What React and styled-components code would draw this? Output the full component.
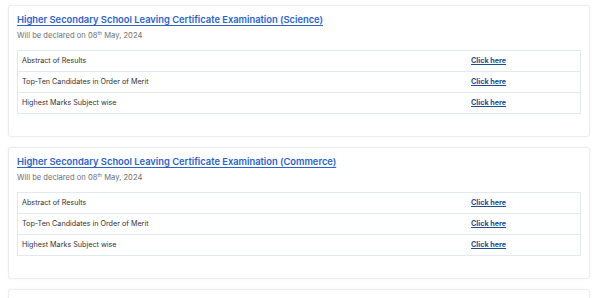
import React from 'react';
import styled, { createGlobalStyle } from 'styled-components';

const GlobalStyle = createGlobalStyle`
    body {
        margin: 0;
        background: #ffffff;
        font-family: 'Inter', 'Liberation Sans', sans-serif;
    }
`;

const Page = styled.div`
    display: flex;
    flex-direction: column;
    gap: 10px;
    padding: 5px 10px 0 8px;
`;

const Card = styled.div`
    background: #fff;
    border: 1px solid #ececec;
    border-radius: 3px;
    box-shadow: 0 0 3px rgba(0, 0, 0, 0.04);
    padding: 6px 8px 22px 8px;
`;

const Title = styled.a`
    display: block;
    font-size: 9.4px;
    line-height: 16px;
    font-weight: 600;
    letter-spacing: -0.02px;
    color: #2b63c8;
    text-decoration: underline;
    text-underline-offset: 2px;
    cursor: pointer;
`;

const Declared = styled.div`
    margin-top: 2px;
    font-size: 7.6px;
    line-height: 12px;
    color: #707070;

    sup {
        font-size: 5px;
        vertical-align: 3px;
        line-height: 0;
    }
`;

const Table = styled.table`
    margin-top: 8px;
    width: 100%;
    border-collapse: collapse;
    border: 1px solid #e2e9f1;
`;

const Row = styled.tr`
    border-top: 1px solid #e2e9f1;
    height: 21px;
`;

const Cell = styled.td`
    padding: 0 4px;
    font-size: 7.2px;
    line-height: 10px;
    color: #333;
    vertical-align: middle;
`;

const LinkCell = styled.td`
    width: 104px;
    padding: 0 5px;
    font-size: 7.2px;
    line-height: 10px;
    vertical-align: middle;
`;

const ClickLink = styled.a`
    font-weight: 700;
    color: #1e4f92;
    text-decoration: underline;
    cursor: pointer;
`;

const items = ['Abstract of Results', 'Top-Ten Candidates in Order of Merit', 'Highest Marks Subject wise'];

const exams = [
    'Higher Secondary School Leaving Certificate Examination (Science)',
    'Higher Secondary School Leaving Certificate Examination (Commerce)',
    'Higher Secondary School Leaving Certificate Examination (Arts)',
];

function ExamCard({ title }) {
    return (
        <Card>
            <Title>{title}</Title>
            <Declared>
                Will be declared on 08<sup>th</sup> May, 2024
            </Declared>
            <Table>
                <tbody>
                    {items.map((item) => (
                        <Row key={item}>
                            <Cell>{item}</Cell>
                            <LinkCell>
                                <ClickLink>Click here</ClickLink>
                            </LinkCell>
                        </Row>
                    ))}
                </tbody>
            </Table>
        </Card>
    );
}

export default function App() {
    return (
        <>
            <GlobalStyle />
            <Page>
                {exams.map((exam) => (
                    <ExamCard key={exam} title={exam} />
                ))}
            </Page>
        </>
    );
}
